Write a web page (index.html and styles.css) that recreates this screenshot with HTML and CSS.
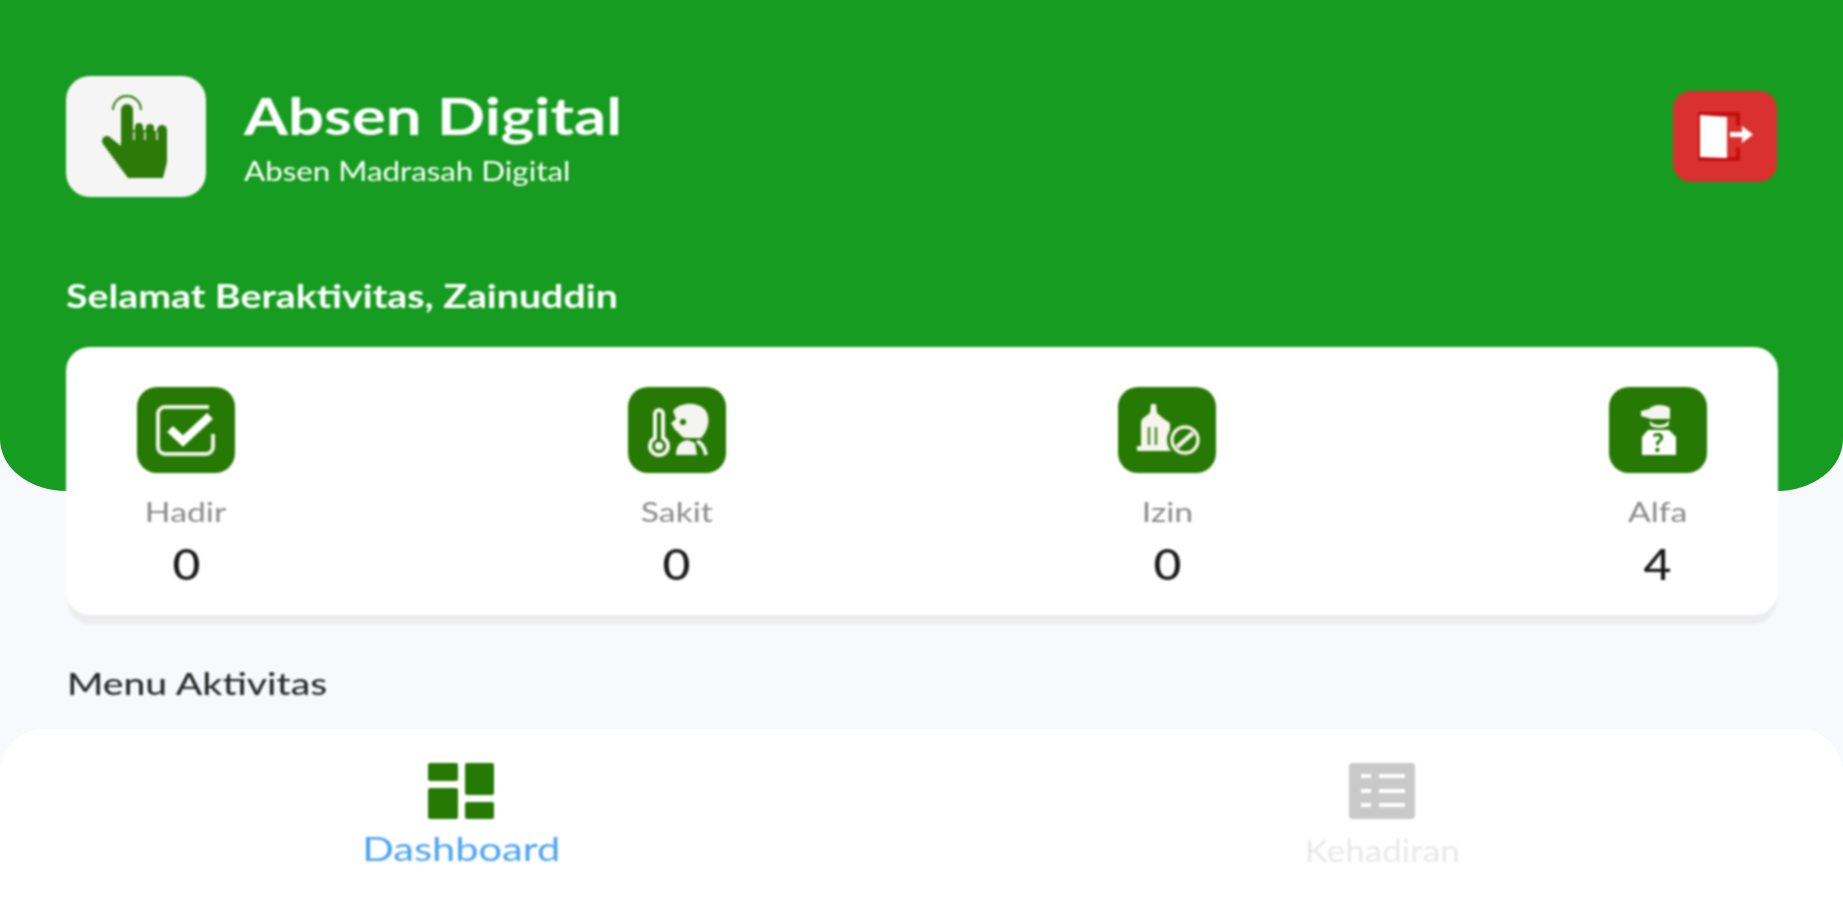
FILE: index.html
```html
<!DOCTYPE html>
<html lang="en">
<head>
    <meta charset="UTF-8">
    <meta name="viewport" content="width=device-width, initial-scale=1.0">
    <title>Absen Digital</title>
    <link rel="stylesheet" href="styles.css">
</head>
<body>
<div class="app">
    <header class="header">
        <div class="top-row">
            <div class="logo">
                <svg width="140" height="121" viewBox="0 0 140 121">
                    <path d="M47 34a14 14 0 0 1 28 0" fill="none" stroke="#2c7a08" stroke-width="2"/>
                    <path d="M55 34a6 6 0 0 1 12 0V54h2v-3a4 4 0 0 1 8 0v3h3v-2a4 4 0 0 1 8 0v3h3v-1a5 5 0 0 1 10 0V86L97 102H62L37 68a5 5 0 0 1 8-6L55 70Z" fill="#2c7a08"/>
                    <path d="M68 56v8M79 56v8M91 56v8" stroke="#f5f5f5" stroke-width="1.500"/>
                </svg>
            </div>
            <div class="brand">
                <h1 class="brand-title">Absen Digital</h1>
                <p class="brand-sub">Absen Madrasah Digital</p>
            </div>
            <button class="logout">
                <svg width="104" height="91" viewBox="0 0 104 91">
                    <path d="M25 21H67V35H63V25H29V66H63V56H67V70H25Z" fill="#c40f0f"/>
                    <path d="M27 24L54 26V67L27 66Z" fill="#fff"/>
                    <path d="M57 41H69V35L80 43.500L69 52V46H57Z" fill="#fff"/>
                </svg>
            </button>
        </div>
        <p class="greeting">Selamat Beraktivitas, Zainuddin</p>
    </header>

    <section class="stats">
        <div class="stat">
            <div class="stat-icon">
                <svg width="98" height="86" viewBox="0 0 98 86">
                    <path d="M72 20H28a7 7 0 0 0-7 7V60a7 7 0 0 0 7 7H69a7 7 0 0 0 7-7V47" fill="none" stroke="#eef0e8" stroke-width="4"/>
                    <path d="M33 42L46 54L73 29" fill="none" stroke="#fff" stroke-width="8.500"/>
                </svg>
            </div>
            <div class="stat-label">Hadir</div>
            <div class="stat-value">0</div>
        </div>
        <div class="stat">
            <div class="stat-icon">
                <svg width="98" height="86" viewBox="0 0 98 86">
                    <path d="M27 27a4 4 0 0 1 8 0V51a9 9 0 1 1-8 0Z" fill="none" stroke="#f4f4f0" stroke-width="4"/>
                    <circle cx="31" cy="59" r="4" fill="#f4f4f0"/>
                    <path d="M45 24C52 15 71 14 78 24C83 32 80 44 73 51H58C53 51 51 45 47 43L43 36L48 32Z" fill="#f4f4f0"/>
                    <circle cx="55" cy="35" r="3" fill="#267a03"/>
                    <path d="M48 68C48 60 51 54 60 53L67 56L69 68Z" fill="#f4f4f0"/>
                    <path d="M69 54C75 57 77 62 78 68" fill="none" stroke="#f4f4f0" stroke-width="4"/>
                </svg>
            </div>
            <div class="stat-label">Sakit</div>
            <div class="stat-value">0</div>
        </div>
        <div class="stat">
            <div class="stat-icon">
                <svg width="98" height="86" viewBox="0 0 98 86">
                    <path d="M24 32L32 26L33 17H38L39 26L46 32L52 36V58H55V64H19V59H23V36Z" fill="#f7f5ee"/>
                    <path d="M31 40V58M38 40V58" stroke="#4f8f2f" stroke-width="2.500"/>
                    <circle cx="66" cy="53" r="17" fill="#267a03"/>
                    <circle cx="67" cy="53" r="13" fill="none" stroke="#f4efe2" stroke-width="3.500"/>
                    <path d="M59 60L75 46" stroke="#f4efe2" stroke-width="4.500"/>
                </svg>
            </div>
            <div class="stat-label">Izin</div>
            <div class="stat-value">0</div>
        </div>
        <div class="stat">
            <div class="stat-icon">
                <svg width="98" height="86" viewBox="0 0 98 86">
                    <path d="M32 24L40 22C44 17 56 17 61 21V32H42L32 29Z" fill="#f6f4f0"/>
                    <path d="M41 33C42 39 57 40 60 33V38C57 42 44 42 41 38Z" fill="#f6f4f0"/>
                    <path d="M33 68V50L39 43H60L67 50V68Z" fill="#fff"/>
                    <text class="question" x="49" y="65" text-anchor="middle">?</text>
                </svg>
            </div>
            <div class="stat-label">Alfa</div>
            <div class="stat-value">4</div>
        </div>
    </section>

    <h2 class="menu-title">Menu Aktivitas</h2>

    <nav class="bottom-nav">
        <a class="nav-item">
            <svg width="66" height="56" viewBox="0 0 66 56">
                <rect x="0" y="0" width="30" height="18" rx="2" fill="#267a03"/>
                <rect x="0" y="25" width="30" height="31" rx="2" fill="#267a03"/>
                <rect x="37" y="0" width="29" height="32" rx="2" fill="#267a03"/>
                <rect x="37" y="39" width="29" height="17" rx="2" fill="#267a03"/>
            </svg>
            <span class="nav-label active">Dashboard</span>
        </a>
        <a class="nav-item">
            <svg width="66" height="56" viewBox="0 0 66 56">
                <rect width="66" height="56" rx="4" fill="#c9c9c9"/>
                <path d="M12 13H22M30 13H56M12 28H22M30 28H56M12 42H22M30 42H56" stroke="#fff" stroke-width="4"/>
            </svg>
            <span class="nav-label">Kehadiran</span>
        </a>
    </nav>
</div>
</body>
</html>
```

FILE: styles.css
```css
*{
    margin: 0px;
    box-sizing: border-box;
}
body{
    background-color: #f8f9fc;
    font-family: Lato, "Open Sans", sans-serif;
}
.app{
    height: 900px;
    display: flex;
    flex-direction: column;
    overflow: hidden;
}
/* the source is a soft upscaled capture, so content gets a slight blur */
.top-row, .greeting, .stats, .menu-title, .nav-item{
    filter: blur(0.8px);
}
.header{
    height: 491px;
    padding: 76px 66px 0px 66px;
    background-color: #169c20;
    border-radius: 0px 0px 66px 66px / 0px 0px 52px 52px;
    color: white;
}
.top-row{
    display: flex;
    align-items: center;
}
.logo{
    width: 140px;
    height: 121px;
    background-color: #f5f5f5;
    border-radius: 24px;
}
.logo svg, .logout svg, .stat-icon svg{
    display: block;
}
.brand{
    margin-left: 38px;
    flex: 1;
}
.brand-title{
    font-size: 52px;
    line-height: 60px;
    font-weight: 700;
    transform: scaleX(1.22);
    transform-origin: left;
}
.brand-sub{
    margin-top: 9px;
    font-size: 27px;
    line-height: 34px;
    font-weight: 400;
    transform: scaleX(1.16);
    transform-origin: left;
}
.logout{
    width: 104px;
    height: 91px;
    padding: 0px;
    border: none;
    border-radius: 18px;
    background-color: #d9322e;
}
.greeting{
    margin-top: 77px;
    font-size: 33px;
    line-height: 42px;
    font-weight: 700;
    transform: scaleX(1.19);
    transform-origin: left;
}
.stats{
    display: flex;
    justify-content: space-between;
    height: 268px;
    margin: -144px 65px 0px 66px;
    padding: 40px 71px 0px 71px;
    background-color: white;
    border-radius: 24px;
    box-shadow: 0px 11px 2px -2px #ececee;
}
.stat{
    width: 98px;
    display: flex;
    flex-direction: column;
    align-items: center;
}
.stat-icon{
    width: 98px;
    height: 86px;
    background-color: #267a03;
    border-radius: 20px;
}
.stat-label{
    margin-top: 23px;
    font-size: 27px;
    line-height: 32px;
    color: #8a8a8a;
    transform: scaleX(1.25);
}
.stat-value{
    margin-top: 11px;
    font-size: 43px;
    line-height: 50px;
    font-weight: 500;
    color: #1a1a1a;
    transform: scaleX(1.12);
}
.question{
    font-size: 26px;
    font-weight: 900;
    fill: #267a03;
}
.menu-title{
    margin: 49px 0px 0px 67px;
    font-size: 31px;
    line-height: 38px;
    font-weight: 500;
    color: #2a2a2a;
    transform: scaleX(1.26);
    transform-origin: left;
}
.bottom-nav{
    margin-top: auto;
    height: 171px;
    display: flex;
    background-color: white;
    border-radius: 44px 44px 0px 0px;
}
.nav-item{
    flex: 1;
    padding-top: 34px;
    display: flex;
    flex-direction: column;
    align-items: center;
}
.nav-label{
    margin-top: 12px;
    font-size: 30px;
    line-height: 38px;
    color: #e9e9e9;
    transform: scaleX(1.17);
}
.nav-label.active{
    margin-top: 11px;
    font-size: 32px;
    color: #4aa3f5;
    transform: scaleX(1.3);
}
```
